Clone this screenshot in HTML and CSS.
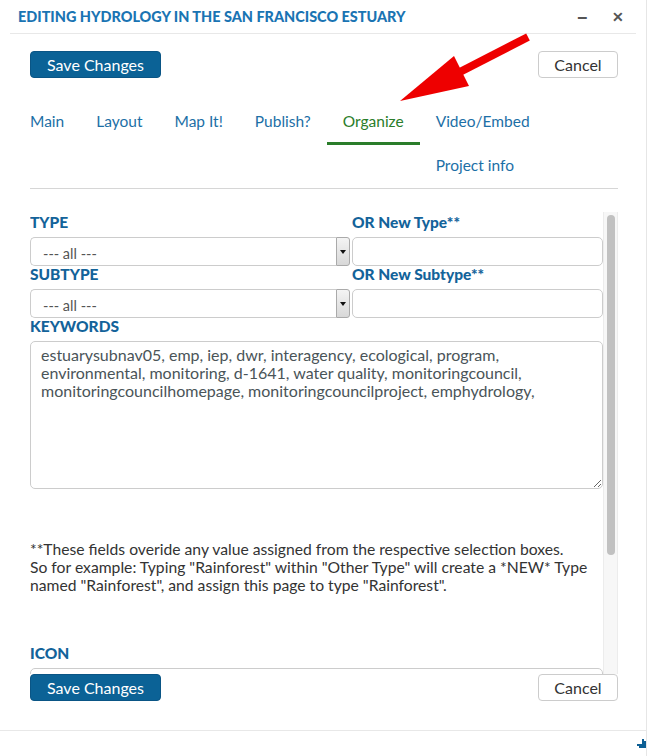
FILE: index.html
```html
<!DOCTYPE html>
<html lang="en">
<head>
  <meta charset="UTF-8" />
  <title>Editing Hydrology in the San Francisco Estuary</title>
  <link rel="stylesheet" href="styles.css">
</head>
<body>
  <div class="dialog">
    <div class="titlebar">
      <span class="title">EDITING HYDROLOGY IN THE SAN FRANCISCO ESTUARY</span>
      <span class="tb-btn minimize">&minus;</span>
      <span class="tb-btn close">&#x2715;</span>
    </div>

    <div class="body">
      <div class="actions top">
        <button class="btn btn-primary">Save Changes</button>
        <button class="btn btn-default">Cancel</button>
      </div>

      <div class="tabnav">
        <ul class="tabs">
          <li><a href="#">Main</a></li>
          <li><a href="#">Layout</a></li>
          <li><a href="#">Map It!</a></li>
          <li><a href="#">Publish?</a></li>
          <li class="active"><a href="#">Organize</a></li>
          <li><a href="#">Video/Embed</a></li>
          <li><a href="#">Project info</a></li>
        </ul>
      </div>

      <div class="pane">
        <div class="pane-content">
          <div class="grid">
            <div class="field">
              <label>TYPE</label>
              <div class="select-wrap">
                <select><option>--- all ---</option></select>
                <span class="select-arrow"></span>
              </div>
            </div>
            <div class="field">
              <label>OR New Type**</label>
              <input type="text" />
            </div>
            <div class="field">
              <label>SUBTYPE</label>
              <div class="select-wrap">
                <select><option>--- all ---</option></select>
                <span class="select-arrow"></span>
              </div>
            </div>
            <div class="field">
              <label>OR New Subtype**</label>
              <input type="text" />
            </div>
          </div>

          <div class="field">
            <label>KEYWORDS</label>
            <textarea>estuarysubnav05, emp, iep, dwr, interagency, ecological, program, environmental, monitoring, d-1641, water quality, monitoringcouncil, monitoringcouncilhomepage, monitoringcouncilproject, emphydrology,</textarea>
          </div>

          <p class="note">**These fields overide any value assigned from the respective selection boxes.<br>
          So for example: Typing "Rainforest" within "Other Type" will create a *NEW* Type named "Rainforest", and assign this page to type "Rainforest".</p>

          <div class="field icon-field">
            <label>ICON</label>
            <input type="text" />
          </div>
        </div>
        <div class="scrollbar"><div class="thumb"></div></div>
      </div>

      <div class="actions bottom">
        <button class="btn btn-primary">Save Changes</button>
        <button class="btn btn-default">Cancel</button>
      </div>
    </div>

    <div class="footer">
      <svg class="grip" width="10" height="10" viewBox="0 0 10 10">
        <path d="M7 1 V7 H1 M9 3 V9 H3" fill="none" stroke="#0d5f94" stroke-width="2"/>
      </svg>
    </div>

    <svg class="pointer" width="650" height="120" viewBox="0 0 650 120">
      <line x1="528" y1="37" x2="456" y2="74" stroke="#ee0000" stroke-width="8"/>
      <polygon points="400,101 454,56 469,86" fill="#ee0000"/>
    </svg>
  </div>
</body>
</html>
```

FILE: styles.css
```css
body {
  margin: 0;
  font-family: Lato, "Open Sans", sans-serif;
  background: #fff;
}
.dialog {
  position: relative;
  width: 646px;
  height: 756px;
  border-right: 1px solid #e6e6e6;
  background: #fff;
}
.titlebar {
  display: flex;
  align-items: center;
  height: 34px;
  margin: 0 10px;
  padding-left: 8px;
  border-bottom: 1px solid #e8e8e8;
  box-sizing: border-box;
}
.title {
  flex: 1;
  font-size: 14.45px;
  font-weight: 900;
  color: #1a74b3;
}
.tb-btn {
  color: #555;
  font-weight: bold;
}
.minimize {
  margin-right: 24px;
  font-size: 20px;
}
.close {
  margin-right: 12px;
  font-size: 14px;
}
.body {
  padding: 0 28px 0 30px;
}
.actions {
  display: flex;
  justify-content: space-between;
}
.actions.top {
  margin-top: 17px;
}
.btn {
  font-family: inherit;
  font-size: 16px;
  height: 27px;
  border-radius: 4px;
  cursor: pointer;
}
.btn-primary {
  width: 131px;
  background: #0b6296;
  color: #fff;
  border: 1px solid #0a5585;
}
.btn-default {
  width: 80px;
  background: #fff;
  color: #333;
  border: 1px solid #ccc;
}
.tabnav {
  margin-top: 20px;
  padding-bottom: 2px;
  border-bottom: 1px solid #d6d6d6;
}
.tabnav::after {
  content: "";
  display: block;
  clear: both;
}
.tabs {
  list-style: none;
  margin: 0 0 0 -16px;
  padding: 0;
}
.tabs li {
  float: left;
  height: 44px;
}
.tabs li.active {
  height: 47px;
}
.tabs a {
  display: block;
  padding: 13px 16px 11px;
  line-height: 20px;
  font-size: 15.5px;
  color: #1c6fa6;
  text-decoration: none;
}
.tabs li.active a {
  color: #2a7d2a;
  border-bottom: 3px solid #2a7d2a;
}
.pane {
  display: flex;
  height: 462px;
  margin-top: 23px;
}
.pane-content {
  flex: 1;
  overflow: hidden;
  padding-top: 2px;
}
.scrollbar {
  width: 13px;
  background: #f7f7f7;
  border-left: 1px solid #ececec;
  border-right: 1px solid #ececec;
}
.thumb {
  height: 340px;
  margin: 3px 2px 0 3px;
  background: #c1c1c1;
  border-radius: 4px;
}
.grid {
  display: grid;
  grid-template-columns: 320px 1fr;
  column-gap: 2px;
}
.field label {
  display: block;
  font-size: 15.5px;
  font-weight: 900;
  line-height: 16px;
  margin-bottom: 7px;
  color: #13639a;
}
.select-wrap {
  display: flex;
  height: 29px;
}
.select-wrap select {
  flex: 1;
  appearance: none;
  -webkit-appearance: none;
  font-family: inherit;
  font-size: 14.5px;
  color: #555;
  padding: 3px 12px 0;
  border: 1px solid #ccc;
  border-right: none;
  border-radius: 5px 0 0 5px;
  background: #fff;
}
.select-arrow {
  width: 12px;
  border: 1px solid #aaa;
  border-radius: 0 3px 3px 0;
  background: linear-gradient(#f4f4f4, #d8d8d8);
  display: flex;
  align-items: center;
  justify-content: center;
}
.select-arrow::after {
  content: "";
  border-left: 3px solid transparent;
  border-right: 3px solid transparent;
  border-top: 4px solid #111;
}
.field input {
  display: block;
  width: 100%;
  height: 29px;
  box-sizing: border-box;
  border: 1px solid #ccc;
  border-radius: 5px;
}
textarea {
  display: block;
  width: 100%;
  height: 148px;
  box-sizing: border-box;
  padding: 4px 10px;
  border: 1px solid #ccc;
  border-radius: 5px;
  font-family: inherit;
  font-size: 16px;
  line-height: 18px;
  color: #4a5458;
  resize: both;
}
.note {
  margin: 51px 0 0;
  font-size: 15.7px;
  line-height: 18px;
  color: #333;
}
.icon-field {
  margin-top: 51px;
}
.actions.bottom {
  margin-top: 0;
}
.footer {
  position: relative;
  margin-top: 29px;
  height: 24px;
  border-top: 1px solid #e8e8e8;
}
.grip {
  position: absolute;
  right: 0;
  bottom: 7px;
}
.pointer {
  position: absolute;
  left: 0;
  top: 0;
  pointer-events: none;
}
```
